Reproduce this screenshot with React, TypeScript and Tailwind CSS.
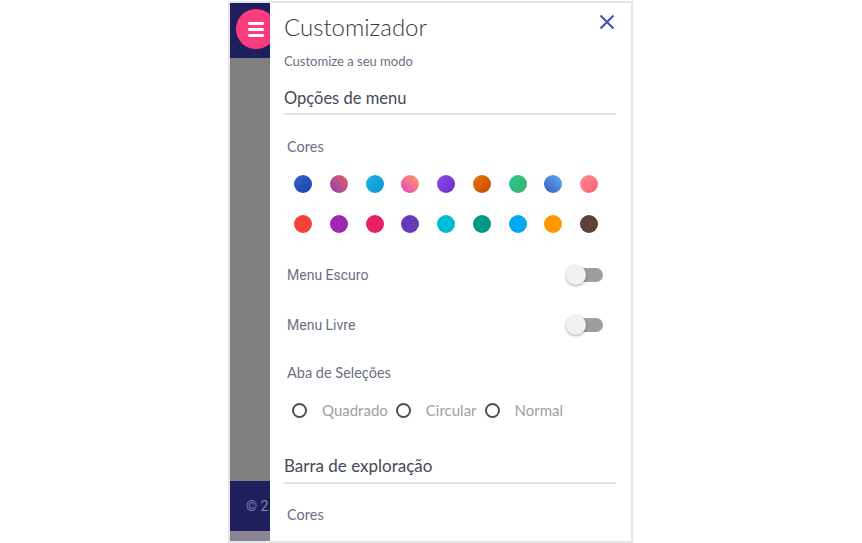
import React from "react";

const topColors = [
  "bg-gradient-to-br from-[#2f62cc] to-[#1f44a6]",
  "bg-gradient-to-tr from-[#8a3aa6] to-[#f05a62]",
  "bg-gradient-to-br from-[#1cb6e0] to-[#0d92d4]",
  "bg-gradient-to-tr from-[#ea1fcb] to-[#f9a03a]",
  "bg-gradient-to-br from-[#8f48f2] to-[#6b2cc2]",
  "bg-gradient-to-br from-[#ee7400] to-[#c4460a]",
  "bg-gradient-to-br from-[#20d090] to-[#3aab68]",
  "bg-gradient-to-tr from-[#3c5abc] to-[#5bb2f2]",
  "bg-gradient-to-br from-[#ff8a9c] to-[#ff5e6a]",
];

const bottomColors = [
  "bg-[#f44336]",
  "bg-[#9c27b0]",
  "bg-[#e91e63]",
  "bg-[#673ab7]",
  "bg-[#00bcd4]",
  "bg-[#009688]",
  "bg-[#03a9f4]",
  "bg-[#ff9800]",
  "bg-[#5d4037]",
];

function Toggle() {
  return (
    <div className="relative w-[37px] h-[20px] mr-[13px]">
      <div className="absolute right-0 top-[3px] w-[35px] h-[14px] rounded-full bg-[#9e9e9e]" />
      <div className="absolute left-0 top-0 w-[20px] h-[20px] rounded-full bg-[#f1f1f1] shadow-[0_1px_3px_rgba(0,0,0,0.35)]" />
    </div>
  );
}

function Radio({ label }: { label: string }) {
  return (
    <div className="flex items-center">
      <span className="w-[15px] h-[15px] rounded-full border-2 border-[#505050]" />
      <span className="ml-[15px] text-[15px] text-[#a0a0a0]">{label}</span>
    </div>
  );
}

export default function App() {
  return (
    <div className="w-[862px] h-[543px] bg-white font-['Lato',sans-serif]">
      <div className="ml-[228px] mt-[1px] w-[405px] h-[542px] border-2 border-[#e6e6e6] flex overflow-hidden">
        {/* app behind the drawer */}
        <div className="relative w-[40px] flex flex-col">
          <div className="h-[55px] bg-[#1e1f5c]" />
          <div className="flex-1 bg-[#7f7f7f]" />
          <div className="h-[50px] bg-[#1e1f5c] flex items-center pl-[16px]">
            <span className="text-[14px] text-[#7e84b4] font-['Roboto',sans-serif] whitespace-nowrap">© 2</span>
          </div>
          <div className="h-[10px] bg-[#8b8593]" />
          <div className="absolute left-[6px] top-[6px] w-[40px] h-[40px] rounded-full bg-[#fb3d7f] flex flex-col items-center justify-center gap-[3px]">
            <span className="w-[16px] h-[3px] bg-white rounded-sm" />
            <span className="w-[16px] h-[3px] bg-white rounded-sm" />
            <span className="w-[16px] h-[3px] bg-white rounded-sm" />
          </div>
        </div>

        {/* customizer panel */}
        <div className="relative z-10 w-[361px] bg-white pl-[14px] pr-[15px]">
          <div className="mt-[8px] h-[32px] flex justify-between">
            <span className="text-[24px] leading-[32px] font-light text-[#3a3a3a]">Customizador</span>
            <svg className="mt-[3px] mr-[1px]" width="16" height="16" viewBox="0 0 16 16">
              <path d="M1.5 1.5L14.5 14.5M14.5 1.5L1.5 14.5" stroke="#3f51b5" strokeWidth="2" />
            </svg>
          </div>
          <div className="mt-[9px] text-[13px] leading-[18px] text-[#6b6f82]">Customize a seu modo</div>

          <div className="mt-[16px] pb-[3px] border-b-2 border-[#e3e3e3]">
            <div className="text-[16.5px] leading-[24px] text-[#464855]">Opções de menu</div>
          </div>

          <div className="pl-[3px]">
            <div className="mt-[22px] text-[14.5px] leading-[20px] text-[#6b6f82]">Cores</div>
            <div className="mt-[18px] ml-[7px] grid grid-cols-9 w-[321.75px]">
              {topColors.map((c, i) => (
                <span key={i} className={`w-[18px] h-[18px] rounded-full ${c}`} />
              ))}
            </div>
            <div className="mt-[22px] ml-[7px] grid grid-cols-9 w-[321.75px]">
              {bottomColors.map((c, i) => (
                <span key={i} className={`w-[18px] h-[18px] rounded-full ${c}`} />
              ))}
            </div>

            <div className="mt-[32px] h-[20px] flex items-center justify-between">
              <span className="text-[14px] text-[#6b6f82] font-['Roboto',sans-serif]">Menu Escuro</span>
              <Toggle />
            </div>
            <div className="mt-[30px] h-[20px] flex items-center justify-between">
              <span className="text-[14px] text-[#6b6f82] font-['Roboto',sans-serif]">Menu Livre</span>
              <Toggle />
            </div>

            <div className="mt-[28px] text-[14.5px] leading-[20px] text-[#6b6f82]">Aba de Seleções</div>
            <div className="mt-[17px] h-[20px] ml-[5px] flex items-center gap-[8px]">
              <Radio label="Quadrado" />
              <Radio label="Circular" />
              <Radio label="Normal" />
            </div>
          </div>

          <div className="mt-[34px] pb-[4px] border-b-2 border-[#e3e3e3]">
            <div className="text-[17px] leading-[24px] text-[#464855]">Barra de exploração</div>
          </div>
          <div className="pl-[3px] mt-[21px] text-[14.5px] leading-[20px] text-[#6b6f82]">Cores</div>
        </div>
      </div>
    </div>
  );
}
